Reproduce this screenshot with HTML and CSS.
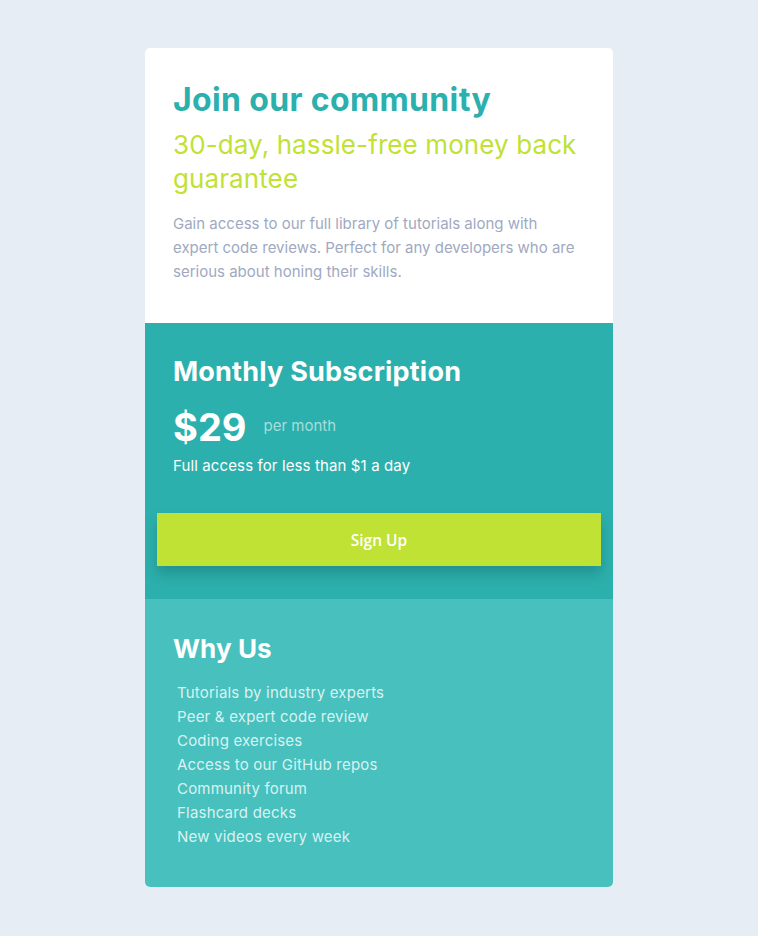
FILE: index.html
```html
<!DOCTYPE html>
<html lang="en">
<head>
<meta charset="utf-8">
<title>Single price grid</title>
<link rel="stylesheet" href="styles.css">
</head>
<body>
<main class="card">
  <section class="intro">
    <h1 class="intro-title">Join our community</h1>
    <h2 class="intro-sub">30-day, hassle-free money back guarantee</h2>
    <p class="intro-text">Gain access to our full library of tutorials along with expert code reviews. Perfect for any developers who are serious about honing their skills.</p>
  </section>
  <section class="sub">
    <h2 class="sub-title">Monthly Subscription</h2>
    <div class="price-row">
      <span class="price">$29</span>
      <span class="per">per month</span>
    </div>
    <p class="sub-text">Full access for less than $1 a day</p>
    <button class="btn">Sign Up</button>
  </section>
  <section class="why">
    <h2 class="why-title">Why Us</h2>
    <ul class="why-list">
      <li>Tutorials by industry experts</li>
      <li>Peer &amp; expert code review</li>
      <li>Coding exercises</li>
      <li>Access to our GitHub repos</li>
      <li>Community forum</li>
      <li>Flashcard decks</li>
      <li>New videos every week</li>
    </ul>
  </section>
</main>
</body>
</html>
```
FILE: styles.css
```css
* { box-sizing: border-box; }
html, body { margin: 0; padding: 0; }
body {
  background: #e6edf5;
  font-family: Inter, "Open Sans", sans-serif;
  padding: 48px 0 49px;
}
.card {
  width: 468px;
  margin: 0 auto;
  border-radius: 5px;
  overflow: hidden;
  background: #fff;
}
h1, h2, p, ul { margin: 0; }

.intro { padding: 34px 28px 0; height: 275px; }
.intro-title {
  color: #2bb0ae;
  font-size: 32px;
  line-height: 36px;
  font-weight: 700;
  letter-spacing: 0.35px;
}
.intro-sub {
  margin-top: 10px;
  color: #bfe234;
  font-size: 26px;
  line-height: 34px;
  font-weight: 400;
  letter-spacing: 0.1px;
}
.intro-text {
  margin-top: 16px;
  color: #a0a9c0;
  font-size: 15px;
  line-height: 24px;
}

.sub {
  background: #2cb0ad;
  padding: 33px 12px 0;
  height: 276px;
}
.sub-title, .sub-text, .price-row { margin-left: 16px; margin-right: 16px; }
.sub-title {
  color: #fff;
  font-size: 27px;
  line-height: 32px;
  font-weight: 700;
  letter-spacing: 0.2px;
}
.price-row {
  margin-top: 19px;
  display: flex;
  align-items: center;
  gap: 17px;
  height: 40px;
}
.price {
  color: #fff;
  font-size: 38px;
  line-height: 40px;
  font-weight: 700;
}
.per {
  color: #a6dedc;
  font-size: 15px;
  line-height: 20px;
  margin-top: -2px;
}
.sub-text {
  margin-top: 7px;
  color: #fff;
  font-size: 15px;
  line-height: 24px;
  letter-spacing: 0.12px;
}
.btn {
  display: block;
  width: 100%;
  height: 53px;
  margin-top: 35px;
  border: 0;
  background: #bfe234;
  color: #fff;
  font-family: "Open Sans", "Noto Sans", sans-serif;
  font-weight: 600;
  font-size: 15.5px;
  box-shadow: 0 8px 12px rgba(0, 40, 40, 0.22);
}

.why {
  background: #47c0be;
  padding: 34px 28px 0;
  height: 288px;
}
.why-title {
  color: #fff;
  font-size: 26px;
  line-height: 32px;
  font-weight: 700;
  letter-spacing: 0.1px;
}
.why-list {
  list-style: none;
  padding: 0 0 0 4px;
  margin-top: 16px;
  color: #daf2f1;
  font-size: 15px;
  line-height: 24px;
  letter-spacing: 0.2px;
}
```
